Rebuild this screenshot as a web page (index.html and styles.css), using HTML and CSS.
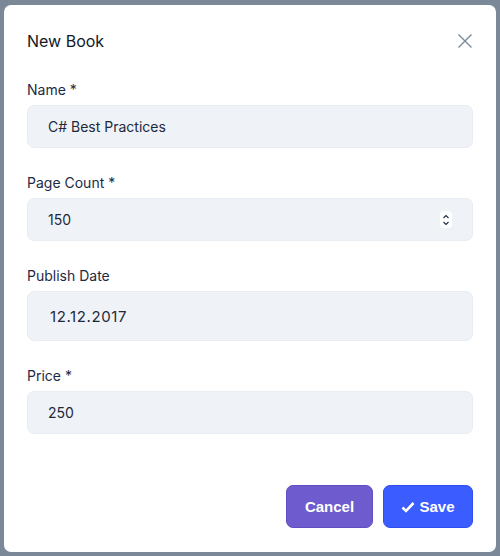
FILE: index.html
```html
<!DOCTYPE html>
<html>
<head>
<meta charset="utf-8">
<link rel="stylesheet" href="styles.css">
</head>
<body>
<div class="dialog">
  <div class="header">
    <span class="title">New Book</span>
    <svg class="close" width="16" height="16" viewBox="0 0 16 16"><path d="M1.5 1.5 L14.5 14.5 M14.5 1.5 L1.5 14.5" stroke="#7a8a9b" stroke-width="1.4" fill="none"/></svg>
  </div>
  <div class="form">
    <div class="field">
      <label class="label">Name *</label>
      <div class="input">C# Best Practices</div>
    </div>
    <div class="field">
      <label class="label">Page Count *</label>
      <div class="input number">150
        <span class="spin">
          <svg width="10" height="16" viewBox="0 0 10 16"><path d="M2.5 6 L5 3.5 L7.5 6 M2.5 10 L5 12.5 L7.5 10" stroke="#1e2a3b" stroke-width="1.1" fill="none"/></svg>
        </span>
      </div>
    </div>
    <div class="field">
      <label class="label">Publish Date</label>
      <div class="input date">12.12.2017</div>
    </div>
    <div class="field">
      <label class="label">Price *</label>
      <div class="input">250</div>
    </div>
  </div>
  <div class="footer">
    <button class="btn cancel">Cancel</button>
    <button class="btn save"><svg width="14" height="12" viewBox="0 0 14 12"><path d="M1.5 6.5 L5 10 L12.5 2" stroke="#fff" stroke-width="2.6" fill="none"/></svg>Save</button>
  </div>
</div>
</body>
</html>
```
FILE: styles.css
```css
html, body { margin: 0; padding: 0; }
body {
  width: 500px;
  height: 556px;
  background: #7a8898;
  font-family: Inter, "Noto Sans", sans-serif;
  color: #1e293b;
  padding: 5px 4px 4px 4px;
  box-sizing: border-box;
}
.dialog {
  background: #fff;
  border-radius: 7px;
  height: 547px;
  box-sizing: border-box;
  padding: 0 23px 0 23px;
  display: flex;
  flex-direction: column;
}
.header {
  display: flex;
  justify-content: space-between;
  align-items: center;
  height: 72px;
}
.title { font-size: 16px; color: #111827; }
.form { display: flex; flex-direction: column; gap: 25px; padding-top: 3px; }
.field { display: flex; flex-direction: column; }
.label { font-size: 14px; color: #1e2a44; line-height: 20px; margin-bottom: 5px; }
.input {
  background: #eff3f7;
  border: 1px solid #e8edf2;
  border-radius: 7px;
  height: 43px;
  box-sizing: border-box;
  padding: 0 20px;
  display: flex;
  align-items: center;
  font-size: 14px;
  color: #1e293b;
}
.number { justify-content: space-between; padding-right: 20px; }
.spin {
  width: 12px; height: 17px;
  background: #fff;
  border-radius: 4px;
  display: flex; align-items: center; justify-content: center;
}
.date { height: 50px; padding-left: 22px; font-size: 15px; letter-spacing: 0.6px; }
.footer {
  display: flex;
  justify-content: flex-end;
  gap: 10px;
  margin-top: auto;
  margin-bottom: 24px;
}
.btn {
  font-family: "Liberation Sans", Arial, sans-serif;
  font-weight: bold;
  font-size: 15px;
  color: #fff;
  height: 43px;
  border-radius: 7px;
  display: flex;
  align-items: center;
  justify-content: center;
  gap: 4px;
  cursor: pointer;
}
.cancel { background: #6e5ccf; border: 1px solid #5f4fc2; width: 87px; }
.save { background: #3b5cfe; border: 1px solid #2f4ff0; width: 90px; }
```
